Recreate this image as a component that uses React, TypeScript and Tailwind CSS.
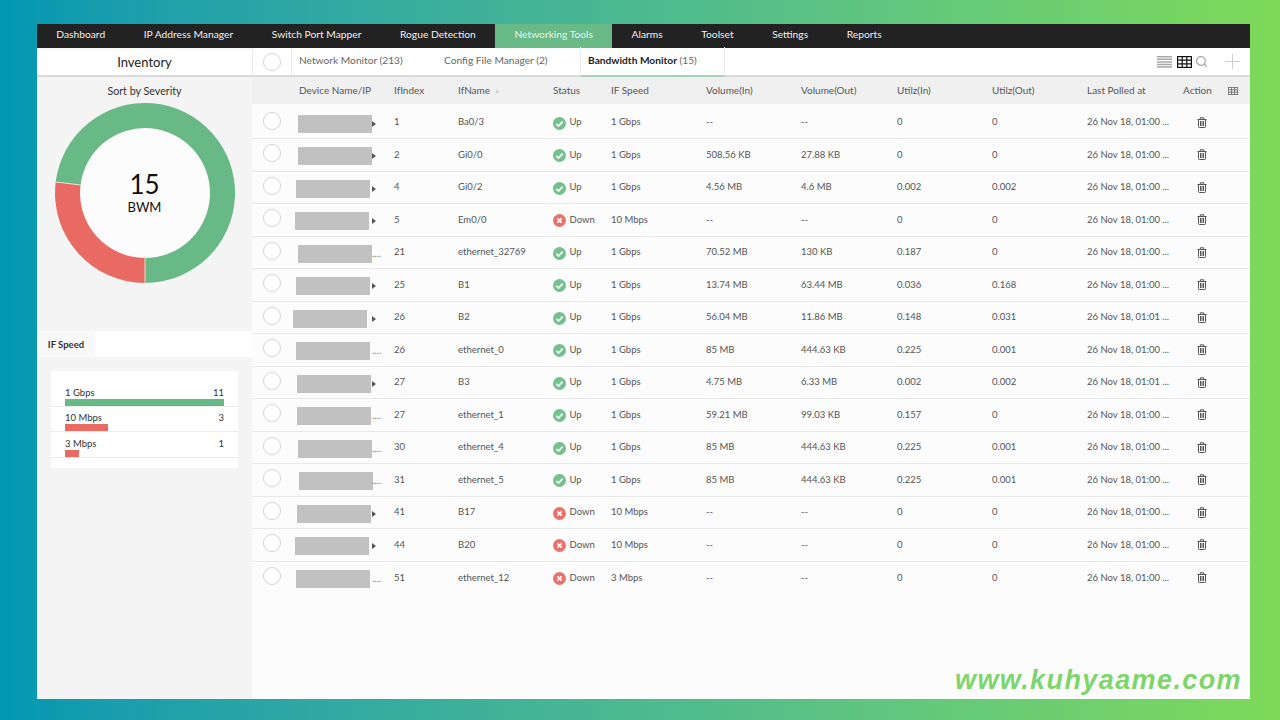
import { Search } from "lucide-react";

const navItems = ["Dashboard", "IP Address Manager", "Switch Port Mapper", "Rogue Detection", "Networking Tools", "Alarms", "Toolset", "Settings", "Reports"];

const columns = "grid-cols-[47px_95px_64px_95px_58px_95px_95px_96px_95px_95px_96px_46px_21px]";

type Row = { x: number; dots?: boolean; idx: string; name: string; up: boolean; speed: string; vIn: string; vOut: string; uIn: string; uOut: string; polled?: string };

const rows: Row[] = [
  { x: 298, idx: "1", name: "Ba0/3", up: true, speed: "1 Gbps", vIn: "--", vOut: "--", uIn: "0", uOut: "0" },
  { x: 298, idx: "2", name: "Gi0/0", up: true, speed: "1 Gbps", vIn: "508.56 KB", vOut: "27.88 KB", uIn: "0", uOut: "0" },
  { x: 296, idx: "4", name: "Gi0/2", up: true, speed: "1 Gbps", vIn: "4.56 MB", vOut: "4.6 MB", uIn: "0.002", uOut: "0.002" },
  { x: 295, idx: "5", name: "Em0/0", up: false, speed: "10 Mbps", vIn: "--", vOut: "--", uIn: "0", uOut: "0" },
  { x: 298, dots: true, idx: "21", name: "ethernet_32769", up: true, speed: "1 Gbps", vIn: "70.52 MB", vOut: "130 KB", uIn: "0.187", uOut: "0" },
  { x: 296, idx: "25", name: "B1", up: true, speed: "1 Gbps", vIn: "13.74 MB", vOut: "63.44 MB", uIn: "0.036", uOut: "0.168" },
  { x: 293, idx: "26", name: "B2", up: true, speed: "1 Gbps", vIn: "56.04 MB", vOut: "11.86 MB", uIn: "0.148", uOut: "0.031", polled: "26 Nov 18, 01:01 ..." },
  { x: 296, dots: true, idx: "26", name: "ethernet_0", up: true, speed: "1 Gbps", vIn: "85 MB", vOut: "444.63 KB", uIn: "0.225", uOut: "0.001" },
  { x: 297, idx: "27", name: "B3", up: true, speed: "1 Gbps", vIn: "4.75 MB", vOut: "6.33 MB", uIn: "0.002", uOut: "0.002", polled: "26 Nov 18, 01:01 ..." },
  { x: 297, dots: true, idx: "27", name: "ethernet_1", up: true, speed: "1 Gbps", vIn: "59.21 MB", vOut: "99.03 KB", uIn: "0.157", uOut: "0" },
  { x: 298, dots: true, idx: "30", name: "ethernet_4", up: true, speed: "1 Gbps", vIn: "85 MB", vOut: "444.63 KB", uIn: "0.225", uOut: "0.001" },
  { x: 299, dots: true, idx: "31", name: "ethernet_5", up: true, speed: "1 Gbps", vIn: "85 MB", vOut: "444.63 KB", uIn: "0.225", uOut: "0.001" },
  { x: 297, idx: "41", name: "B17", up: false, speed: "10 Mbps", vIn: "--", vOut: "--", uIn: "0", uOut: "0" },
  { x: 295, idx: "44", name: "B20", up: false, speed: "10 Mbps", vIn: "--", vOut: "--", uIn: "0", uOut: "0" },
  { x: 296, dots: true, idx: "51", name: "ethernet_12", up: false, speed: "3 Mbps", vIn: "--", vOut: "--", uIn: "0", uOut: "0" },
];

const speeds = [
  { label: "1 Gbps", count: "11", bar: "w-[159px] bg-[#69b987]" },
  { label: "10 Mbps", count: "3", bar: "w-[43px] bg-[#e96a62]" },
  { label: "3 Mbps", count: "1", bar: "w-[14px] bg-[#e96a62]" },
];

function Circle() {
  return <div className="w-[18px] h-[18px] rounded-full border border-[#d4d4d4] bg-white" />;
}

function StatusIcon({ up }: { up: boolean }) {
  return (
    <svg width="13" height="13" viewBox="0 0 13 13" className="mt-[2px] shrink-0">
      <circle cx="6.5" cy="6.5" r="6.5" fill={up ? "#74c08f" : "#e8736c"} />
      {up ? (
        <path d="M3.4 6.8 5.6 9l4-4.3" fill="none" stroke="#fff" strokeWidth="1.7" />
      ) : (
        <path d="M4.4 4.4l4.2 4.2M8.6 4.4 4.4 8.6" fill="none" stroke="#fff" strokeWidth="1.6" />
      )}
    </svg>
  );
}

function TrashIcon() {
  return (
    <svg width="10" height="11" viewBox="0 0 10 11" fill="none" stroke="#555" strokeWidth="1">
      <path d="M0.5 2.5h9M3.3 2.3V.8h3.4v1.5M1.5 2.5v7.2c0 .5.3.8.8.8h5.4c.5 0 .8-.3.8-.8V2.5M3.5 4v5M5 4v5M6.5 4v5" />
    </svg>
  );
}

function ListIcon() {
  return (
    <svg width="15" height="12" viewBox="0 0 15 12" stroke="#a8a8a8" strokeWidth="1.5">
      <path d="M0 .8h15M0 3.3h15M0 5.9h15M0 8.5h15M0 11.1h15" />
    </svg>
  );
}

function TableIcon({ color, size }: { color: string; size: number }) {
  return (
    <svg width={size} height={size * 0.8} viewBox="0 0 15 12" fill="none" stroke={color} strokeWidth="1.2">
      <rect x=".6" y=".6" width="13.8" height="10.8" />
      <path d="M.6 4.2h13.8M.6 7.8h13.8M5.2.6v10.8M9.8.6v10.8" />
    </svg>
  );
}

function Donut() {
  return (
    <svg width="180" height="180" viewBox="0 0 180 180">
      <circle cx="90" cy="90" r="65" fill="#fcfcfc" />
      <path d="M90 180A90 90 0 1 0 .7 79 L25.5 82A65 65 0 1 1 90 155Z" fill="#69b987" />
      <path d="M90 180A90 90 0 0 1 .7 79L25.5 82A65 65 0 0 0 90 155Z" fill="#e96a62" />
      <path d="M90 180V155M.7 79 25.5 82" stroke="#f4efe0" strokeWidth="0.8" />
    </svg>
  );
}

function Sidebar() {
  return (
    <aside className="w-[215px] shrink-0 bg-[#f4f4f4] flex flex-col">
      <div className="h-[29px] bg-white border-t-2 border-t-[#f7f7f7] border-b-2 border-b-[#d9d9d9] flex items-center justify-center text-[13px] text-[#222]">Inventory</div>
      <div className="mt-[5.5px] text-center text-[10.7px] leading-[15px] text-[#333]">Sort by Severity</div>
      <div className="relative mt-[5.5px] mx-auto w-[180px] h-[180px]">
        <Donut />
        <div className="absolute inset-0 flex flex-col items-center justify-center text-[#111]">
          <span className="text-[26px] leading-[30px] mt-[-3px]">15</span>
          <span className="text-[13px] leading-[16px]">BWM</span>
        </div>
      </div>
      <div className="mt-[48px] h-[26px] bg-white flex">
        <div className="w-[58px] pt-[2px] bg-[#f9f9f9] flex items-center justify-center text-[9.5px] font-bold text-[#333]">IF Speed</div>
      </div>
      <div className="mt-[14px] mx-[14px] bg-white pt-[10px] pb-[10.5px]">
        {speeds.map((s) => (
          <div key={s.label} className="border-b border-[#ececec] px-[14px] h-[25.5px] flex flex-col justify-end">
            <div className="flex justify-between text-[9.5px] leading-[13px] text-[#333]">
              <span>{s.label}</span>
              <span>{s.count}</span>
            </div>
            <div className={`h-[7px] ${s.bar}`} />
          </div>
        ))}
      </div>
    </aside>
  );
}

function TableRow({ row }: { row: Row }) {
  return (
    <div className={`grid ${columns} h-[32.5px] items-center border-b border-[#e8e8e8] last:border-b-0 text-[9.5px] text-[#555]`}>
      <div className="flex justify-start pl-[11px] -mt-[3px]"><Circle /></div>
      <div className="relative h-full">
        <div className="absolute top-[8px] w-[74px] h-[18px] bg-[#c1c1c1]" style={{ left: row.x - 299 }} />
        {row.dots ? (
          <span className="absolute left-[73px] top-[10px] text-[#777]">....</span>
        ) : (
          <span className="absolute left-[73px] top-[14px] w-0 h-0 border-y-[3px] border-y-transparent border-l-[4px] border-l-[#555]" />
        )}
      </div>
      <div>{row.idx}</div>
      <div>{row.name}</div>
      <div className="flex items-center gap-[3.5px] whitespace-nowrap"><StatusIcon up={row.up} />{row.up ? "Up" : "Down"}</div>
      <div>{row.speed}</div>
      <div>{row.vIn}</div>
      <div>{row.vOut}</div>
      <div>{row.uIn}</div>
      <div>{row.uOut}</div>
      <div className="whitespace-nowrap">{row.polled ?? "26 Nov 18, 01:00 ..."}</div>
      <div className="pl-[14px]"><TrashIcon /></div>
      <div />
    </div>
  );
}

export default function App() {
  return (
    <div className="relative w-[1280px] h-[720px] overflow-hidden bg-gradient-to-r from-[#0097b2] to-[#7ed957] pt-[24px] pl-[37px] font-['Lato','Open_Sans',sans-serif]">
      <div className="w-[1213px] h-[675px] bg-[#fcfcfc] flex flex-col">
        <nav className="h-[24px] bg-[#222222] flex text-[10.25px] text-[#f0f0f0]">
          {navItems.map((item) => (
            <div key={item} className={`px-[19.3px] pb-[2px] flex items-center whitespace-nowrap ${item === "Networking Tools" ? "bg-[#69b987] text-[#e8f5ec]" : ""}`}>
              {item}
            </div>
          ))}
        </nav>
        <div className="flex flex-1 min-h-0">
          <Sidebar />
          <main className="flex-1 flex flex-col">
            <div className="h-[29px] bg-white border-b-2 border-[#d9d9d9] flex items-stretch text-[10.2px] text-[#666]">
              <div className="w-[40px] flex items-center justify-center border-x border-[#ececec]"><Circle /></div>
              <div className="w-[145px] pl-[7px] flex items-center whitespace-nowrap -mt-[1px]">Network Monitor (213)</div>
              <div className="w-[143px] pl-[7px] flex items-center whitespace-nowrap -mt-[1px]">Config File Manager (2)</div>
              <div className="w-[145px] pl-[7px] flex items-center whitespace-nowrap -mb-[2px] border-b-2 border-[#a9d3b8] border-l border-l-[#ececec] border-r border-r-[#ececec] -mt-[1px]">
                <span className="font-bold text-[#222]">Bandwidth Monitor</span>&nbsp;(15)
              </div>
              <div className="flex-1 flex items-center justify-end gap-[5px] pr-[10px]">
                <ListIcon />
                <TableIcon color="#111" size={15} />
                <Search size={13} color="#a8a8a8" strokeWidth={2.4} className="-ml-[2px]" />
                <svg width="15" height="15" viewBox="0 0 15 15" stroke="#cfcfcf" strokeWidth="1" className="ml-[12px]">
                  <path d="M7.5 0v15M0 7.5h15" />
                </svg>
              </div>
            </div>
            <div className={`grid ${columns} h-[27px] mb-[2.5px] items-center bg-[#f0f0f0] text-[10px] text-[#555]`}>
              <div />
              <div>Device Name/IP</div>
              <div>IfIndex</div>
              <div className="flex items-center gap-[4px]">IfName<span className="text-[6px] text-[#ccc]">▲</span></div>
              <div>Status</div>
              <div>IF Speed</div>
              <div>Volume(In)</div>
              <div>Volume(Out)</div>
              <div>Utilz(In)</div>
              <div>Utilz(Out)</div>
              <div>Last Polled at</div>
              <div>Action</div>
              <div className="flex justify-start -ml-[1px]"><TableIcon color="#666" size={10} /></div>
            </div>
            {rows.map((row, i) => (
              <TableRow key={i} row={row} />
            ))}
          </main>
        </div>
      </div>
      <div className="absolute left-[955px] top-[663px] text-[27px] leading-[34px] font-bold italic tracking-[1.4px] text-[#7ed56c] whitespace-nowrap font-['Liberation_Sans',sans-serif]">
        www.kuhyaame.com
      </div>
    </div>
  );
}
